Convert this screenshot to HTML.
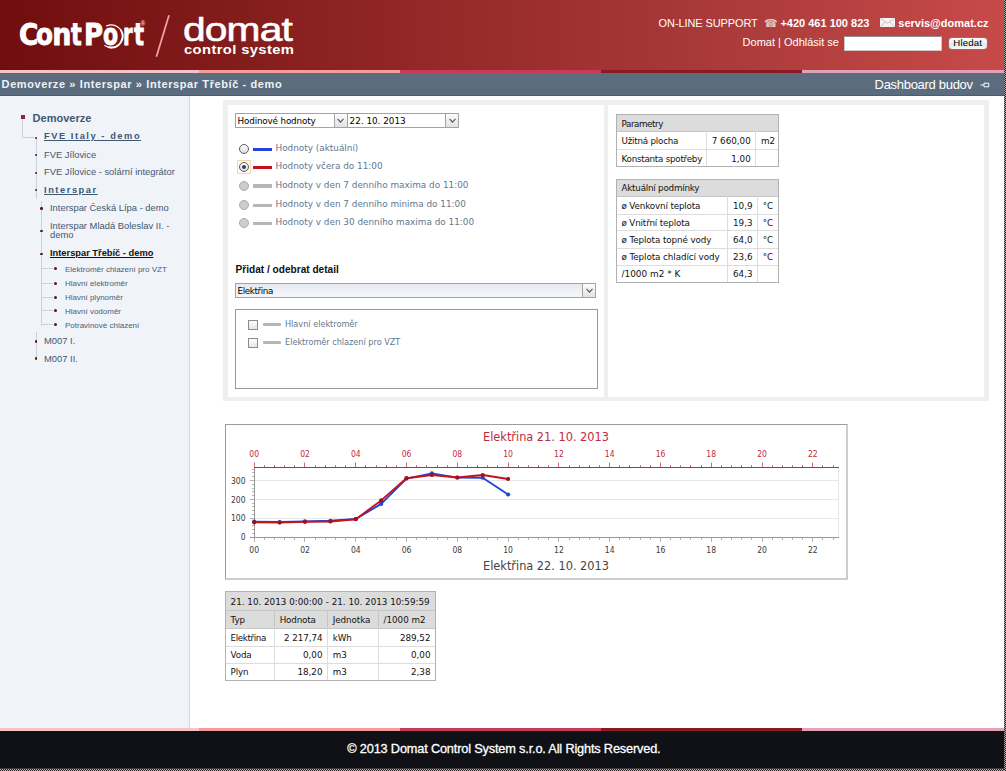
<!DOCTYPE html>
<html lang="cs">
<head>
<meta charset="utf-8">
<title>ContPort - Interspar Třebíč - demo</title>
<style>
*{box-sizing:border-box;margin:0;padding:0}
html,body{width:1006px;height:771px;overflow:hidden;background:#fff}
body{position:relative;font-family:"Liberation Sans",sans-serif;font-size:12px;color:#000}
.a{position:absolute;white-space:nowrap}
.sel{position:absolute;height:15px;border:1px solid #a3a3a3;font-family:"DejaVu Sans",sans-serif;font-size:9.6px;line-height:13px;white-space:nowrap;overflow:hidden;color:#000}
.sel .st{position:absolute;left:1.6px;top:0.9px}
.sel .arr{position:absolute;right:0;top:0;width:13px;height:13px;border-left:1px solid #a3a3a3;background:linear-gradient(#fdfdfd,#e2e2e2)}
.sel .arr svg{position:absolute;left:2.5px;top:4px}
</style>
</head>
<body>
<div class="a" id="header" style="left:0px;top:0px;width:1006px;height:70px;background:linear-gradient(to right,#720d0e 0%,#841e1d 25%,#992d2c 50%,#ae3c3c 75%,#c74a49 100%);"></div>
<div class="a" id="lg1" style="left:18.62px;top:19.60px;font-family:'DejaVu Sans Condensed','DejaVu Sans',sans-serif;font-size:29.9px;line-height:29.9px;color:#fff;font-weight:bold;-webkit-text-stroke:0.8px #fff;"><span style="display:inline-block;transform-origin:0 0;transform:scaleX(0.98);margin-right:-1.87px">C</span><span style="display:inline-block;transform-origin:0 0;transform:scaleX(0.918);margin-right:-2.76px">o</span><span style="display:inline-block;transform-origin:0 0;transform:scaleX(1.0);margin-right:0.04px">n</span><span style="display:inline-block;transform-origin:0 0;transform:scaleX(0.83);margin-right:-0.09px">t</span><span style="display:inline-block;transform-origin:0 0;transform:scaleX(0.965);margin-right:-0.62px">P</span><span style="display:inline-block;transform-origin:0 0;transform:scaleX(0.818);margin-right:0.85px">o</span><span style="display:inline-block;transform-origin:0 0;transform:scaleX(0.72);margin-right:-2.08px">r</span><span style="display:inline-block;transform-origin:0 0;transform:scaleX(0.776);margin-right:0.00px">t</span></div>
<div class="a" id="lg1r" style="left:140.6px;top:20.70px;font-family:'Liberation Sans',sans-serif;font-size:6.5px;line-height:6.5px;color:#f6c9c9;font-weight:bold;">®</div>
<svg class="a" style="left:94px;top:18px" width="36" height="36" viewBox="94 18 36 36"><path d="M106.5 26.0 A11.3 11.3 0 1 1 104.8 45.5" fill="none" stroke="#fff" stroke-width="1.1" stroke-linecap="round"/><path d="M121.1 30.6 A11.3 11.3 0 0 1 109.3 47.3" fill="none" stroke="#fff" stroke-width="1.9" stroke-linecap="round"/></svg>
<svg class="a" style="left:150px;top:10px" width="30" height="52"><line x1="19" y1="5.3" x2="6.4" y2="46.7" stroke="#f2a5a3" stroke-width="1.7"/></svg>
<div class="a" id="lg2" style="left:182.6px;top:12.54px;font-family:'Liberation Sans',sans-serif;font-size:33.4px;line-height:33.4px;color:#fff;letter-spacing:-0.7px;transform-origin:0 0;transform:scaleX(1.22);-webkit-text-stroke:0.6px #fff;">domat</div>
<div class="a" id="lg3" style="left:183.8px;top:43.69px;font-family:'Liberation Sans',sans-serif;font-size:12.3px;line-height:12.3px;color:#fff;font-weight:bold;letter-spacing:0.32px;transform-origin:0 0;transform:scaleX(1.2);">control system</div>
<div class="a" id="sup" style="left:658.6px;top:17.69px;font-family:'Liberation Sans',sans-serif;font-size:11px;line-height:11px;color:#fff;letter-spacing:-0.1px;">ON-LINE SUPPORT</div>
<div class="a" id="telic" style="left:764px;top:17.69px;font-family:'DejaVu Sans',sans-serif;font-size:11px;line-height:11px;color:#e3c3c3;">☎</div>
<div class="a" id="tel" style="left:780.4px;top:17.69px;font-family:'Liberation Sans',sans-serif;font-size:11px;line-height:11px;color:#fff;font-weight:bold;">+420 461 100 823</div>
<svg class="a" style="left:880px;top:18px" width="15" height="9" viewBox="0 0 15 9"><rect x="0" y="0" width="15" height="9" fill="#f6f3f3"/><path d="M0.3 0.3 L7.5 5.2 L14.7 0.3 M0.3 8.7 L5.3 4 M14.7 8.7 L9.7 4" stroke="#c2b4b4" stroke-width="0.8" fill="none"/></svg>
<div class="a" id="mail" style="left:898.3px;top:17.69px;font-family:'Liberation Sans',sans-serif;font-size:11px;line-height:11px;color:#fff;font-weight:bold;">servis@domat.cz</div>
<div class="a" id="dom" style="left:742.6px;top:37.19px;font-family:'Liberation Sans',sans-serif;font-size:11px;line-height:11px;color:#fff;">Domat | Odhlásit se</div>
<div class="a" style="left:844px;top:36px;width:98px;height:15px;background:#fff;border:1px solid #d0c4c4;border-top-color:#8e8e8e"></div>
<div class="a" id="btn" style="left:948px;top:37.3px;width:39.5px;height:12.7px;border-radius:4px;background:linear-gradient(#fff,#efefef 48%,#e4e4e4 52%,#f7f7f7);border:1px solid #8d6f6f;font-family:'Liberation Sans',sans-serif;font-size:9.6px;line-height:10.5px;text-align:center;color:#000;letter-spacing:.2px">Hledat</div>
<div class="a" style="left:0px;top:70px;width:199px;height:3px;background:#f3c3c8;"></div>
<div class="a" style="left:199px;top:70px;width:201px;height:3px;background:#f59b9c;"></div>
<div class="a" style="left:400px;top:70px;width:201px;height:3px;background:#c93a55;"></div>
<div class="a" style="left:601px;top:70px;width:201px;height:3px;background:#8a1b25;"></div>
<div class="a" style="left:802px;top:70px;width:204px;height:3px;background:#e2a1b6;"></div>
<div class="a" id="nav" style="left:0px;top:73px;width:1006px;height:23px;background:#5b6c7e;border-bottom:1px solid #4f5d6b"></div>
<div class="a" id="crumb" style="left:1.6px;top:78.69px;font-family:'Liberation Sans',sans-serif;font-size:11px;line-height:11px;color:#eef2f6;font-weight:bold;letter-spacing:0.6px;">Demoverze » Interspar » Interspar Třebíč - demo</div>
<div class="a" id="dash" style="left:874.6px;top:77.70px;font-family:'Liberation Sans',sans-serif;font-size:13px;line-height:13px;color:#fff;letter-spacing:-0.3px;">Dashboard budov</div>
<svg class="a" style="left:980px;top:82px" width="10" height="6" viewBox="0 0 10 6"><path d="M0.5 3 H4 M4 1.2 H8.8 V4.8 H4 Z" stroke="#fff" stroke-width="1" fill="none"/></svg>
<div class="a" id="side" style="left:0px;top:96px;width:190px;height:632px;background:#f0f4f8;border-right:1px solid #d3dae5"></div>
<div class="a" style="left:22.3px;top:119px;width:1px;height:19px;background:#cfcfdb;"></div>
<div class="a" style="left:22.3px;top:137.3px;width:12px;height:1px;background:#cfcfdb;"></div>
<div class="a" style="left:35.5px;top:139px;width:1px;height:60px;background:#cfcfdb;"></div>
<div class="a" style="left:40.8px;top:201px;width:1px;height:125px;background:#cfcfdb;"></div>
<div class="a" style="left:41px;top:268.2px;width:12px;height:1px;background:#cfcfdb;"></div>
<div class="a" style="left:41px;top:282.6px;width:12px;height:1px;background:#cfcfdb;"></div>
<div class="a" style="left:41px;top:296.6px;width:12px;height:1px;background:#cfcfdb;"></div>
<div class="a" style="left:41px;top:310.4px;width:12px;height:1px;background:#cfcfdb;"></div>
<div class="a" style="left:41px;top:324.4px;width:12px;height:1px;background:#cfcfdb;"></div>
<div class="a" style="left:35.5px;top:332px;width:1px;height:27px;background:#cfcfdb;"></div>
<div class="a" style="left:21px;top:115px;width:4px;height:4px;background:#8c2540;"></div>
<div class="a" id="s0" style="left:32.6px;top:112.69px;font-family:'Liberation Sans',sans-serif;font-size:11px;line-height:11px;color:#3f5873;font-weight:bold;">Demoverze</div>
<div class="a" style="left:34.7px;top:136.5px;width:2.6px;height:2.6px;background:#5a1626;border-radius:50%"></div>
<div class="a" style="left:44px;top:132.13px;font-family:'Liberation Sans',sans-serif;font-size:9.3px;line-height:9.3px;color:#3f5873;font-weight:bold;letter-spacing:1.55px;text-decoration:underline;">FVE Italy - demo</div>
<div class="a" style="left:34.7px;top:153.89999999999998px;width:2.6px;height:2.6px;background:#5a1626;border-radius:50%"></div>
<div class="a" style="left:44px;top:149.85px;font-family:'Liberation Sans',sans-serif;font-size:9.4px;line-height:9.4px;color:#3f5873;">FVE Jílovice</div>
<div class="a" style="left:34.7px;top:171.7px;width:2.6px;height:2.6px;background:#5a1626;border-radius:50%"></div>
<div class="a" style="left:44px;top:167.15px;font-family:'Liberation Sans',sans-serif;font-size:9.4px;line-height:9.4px;color:#3f5873;">FVE Jílovice - solární integrátor</div>
<div class="a" style="left:34.7px;top:188.79999999999998px;width:2.6px;height:2.6px;background:#5a1626;border-radius:50%"></div>
<div class="a" style="left:44px;top:185.93px;font-family:'Liberation Sans',sans-serif;font-size:9.3px;line-height:9.3px;color:#3f5873;font-weight:bold;letter-spacing:1.55px;text-decoration:underline;">Interspar</div>
<div class="a" style="left:40.0px;top:207.29999999999998px;width:2.6px;height:2.6px;background:#5a1626;border-radius:50%"></div>
<div class="a" style="left:50px;top:202.95px;font-family:'Liberation Sans',sans-serif;font-size:9.4px;line-height:9.4px;color:#3f5873;">Interspar Česká Lípa - demo</div>
<div class="a" style="left:40.0px;top:229.7px;width:2.6px;height:2.6px;background:#5a1626;border-radius:50%"></div>
<div class="a" style="left:50px;top:221.45px;font-family:'Liberation Sans',sans-serif;font-size:9.4px;line-height:9.4px;color:#3f5873;">Interspar Mladá Boleslav II. -</div>
<div class="a" style="left:50px;top:230.35px;font-family:'Liberation Sans',sans-serif;font-size:9.4px;line-height:9.4px;color:#3f5873;">demo</div>
<div class="a" style="left:40.0px;top:252.5px;width:2.6px;height:2.6px;background:#5a1626;border-radius:50%"></div>
<div class="a" id="s8" style="left:50px;top:248.53px;font-family:'Liberation Sans',sans-serif;font-size:9.3px;line-height:9.3px;color:#111;font-weight:bold;text-decoration:underline;">Interspar Třebíč - demo</div>
<div class="a" style="left:54.0px;top:267.1px;width:3px;height:3px;background:#5a1626;border-radius:50%"></div>
<div class="a" style="left:65px;top:265.53px;font-family:'Liberation Sans',sans-serif;font-size:8px;line-height:8px;color:#4a607a;">Elektroměr chlazení pro VZT</div>
<div class="a" style="left:54.0px;top:281.6px;width:3px;height:3px;background:#5a1626;border-radius:50%"></div>
<div class="a" style="left:65px;top:280.03px;font-family:'Liberation Sans',sans-serif;font-size:8px;line-height:8px;color:#4a607a;">Hlavní elektroměr</div>
<div class="a" style="left:54.0px;top:295.6px;width:3px;height:3px;background:#5a1626;border-radius:50%"></div>
<div class="a" style="left:65px;top:294.03px;font-family:'Liberation Sans',sans-serif;font-size:8px;line-height:8px;color:#4a607a;">Hlavní plynoměr</div>
<div class="a" style="left:54.0px;top:309.40000000000003px;width:3px;height:3px;background:#5a1626;border-radius:50%"></div>
<div class="a" style="left:65px;top:307.83px;font-family:'Liberation Sans',sans-serif;font-size:8px;line-height:8px;color:#4a607a;">Hlavní vodoměr</div>
<div class="a" style="left:54.0px;top:323.40000000000003px;width:3px;height:3px;background:#5a1626;border-radius:50%"></div>
<div class="a" style="left:65px;top:321.83px;font-family:'Liberation Sans',sans-serif;font-size:8px;line-height:8px;color:#4a607a;">Potravinové chlazení</div>
<div class="a" style="left:34.7px;top:340.0px;width:2.6px;height:2.6px;background:#5a1626;border-radius:50%"></div>
<div class="a" style="left:44px;top:335.65px;font-family:'Liberation Sans',sans-serif;font-size:9.4px;line-height:9.4px;color:#3f5873;">M007 I.</div>
<div class="a" style="left:34.7px;top:357.4px;width:2.6px;height:2.6px;background:#5a1626;border-radius:50%"></div>
<div class="a" style="left:44px;top:354.15px;font-family:'Liberation Sans',sans-serif;font-size:9.4px;line-height:9.4px;color:#3f5873;">M007 II.</div>
<div class="a" style="left:223px;top:100px;width:766px;height:301px;background:#efefef;"></div>
<div class="a" style="left:228px;top:105px;width:376px;height:292px;background:#fff;"></div>
<div class="a" style="left:608px;top:105px;width:376px;height:292px;background:#fff;"></div>
<div class="sel" style="left:235px;top:112.6px;width:112.5px;background:#fff;font-size:8.78px;letter-spacing:-0.15px"><span class="st" style="top:1.9px">Hodinové hodnoty</span><span class="arr"><svg width="7" height="5" viewBox="0 0 7 5"><path d="M0.5 0.8 L3.5 4.2 L6.5 0.8" stroke="#5a5a5a" stroke-width="1.15" fill="none"/></svg></span></div>
<div class="sel" style="left:347px;top:112.6px;width:112px;background:#fff;font-size:8.82px;letter-spacing:0px"><span class="st" style="top:1.9px">22. 10. 2013</span><span class="arr"><svg width="7" height="5" viewBox="0 0 7 5"><path d="M0.5 0.8 L3.5 4.2 L6.5 0.8" stroke="#5a5a5a" stroke-width="1.15" fill="none"/></svg></span></div>
<div class="a" style="left:239px;top:144.3px;width:10px;height:10px;border-radius:50%;background:linear-gradient(#fff,#dcdce0);border:1px solid #5f5b68"></div>
<div class="a" style="left:253.3px;top:147.60000000000002px;width:18.5px;height:3.4px;background:#2346d8;"></div>
<div class="a" style="left:275.5px;top:143.90px;font-family:'DejaVu Sans',sans-serif;font-size:8.865px;line-height:8.865px;color:#5f778f;">Hodnoty (aktuální)</div>
<div class="a" style="left:237px;top:160.20000000000002px;width:14px;height:14px;background:#fffaf3;border:1px solid #f5d8ad"></div>
<div class="a" style="left:239px;top:162.20000000000002px;width:10px;height:10px;border-radius:50%;background:linear-gradient(#fff,#dcdce0);border:1px solid #5f5b68"></div>
<div class="a" style="left:242px;top:165.20000000000002px;width:4px;height:4px;border-radius:50%;background:#4a3b4b"></div>
<div class="a" style="left:253.3px;top:165.50000000000003px;width:18.5px;height:3.4px;background:#c4121e;"></div>
<div class="a" style="left:275.5px;top:161.80px;font-family:'DejaVu Sans',sans-serif;font-size:8.865px;line-height:8.865px;color:#5f778f;">Hodnoty včera do 11:00</div>
<div class="a" style="left:239px;top:181.0px;width:10px;height:10px;border-radius:50%;background:#cdcdcd;border:1px solid #ababab"></div>
<div class="a" style="left:253.3px;top:184.3px;width:18.5px;height:3.4px;background:#b6b6b6;"></div>
<div class="a" style="left:275.5px;top:180.60px;font-family:'DejaVu Sans',sans-serif;font-size:8.865px;line-height:8.865px;color:#5f778f;">Hodnoty v den 7 denního maxima do 11:00</div>
<div class="a" style="left:239px;top:200.20000000000002px;width:10px;height:10px;border-radius:50%;background:#cdcdcd;border:1px solid #ababab"></div>
<div class="a" style="left:253.3px;top:203.50000000000003px;width:18.5px;height:3.4px;background:#b6b6b6;"></div>
<div class="a" style="left:275.5px;top:199.80px;font-family:'DejaVu Sans',sans-serif;font-size:8.865px;line-height:8.865px;color:#5f778f;">Hodnoty v den 7 denního minima do 11:00</div>
<div class="a" style="left:239px;top:218.3px;width:10px;height:10px;border-radius:50%;background:#cdcdcd;border:1px solid #ababab"></div>
<div class="a" style="left:253.3px;top:221.60000000000002px;width:18.5px;height:3.4px;background:#b6b6b6;"></div>
<div class="a" style="left:275.5px;top:217.90px;font-family:'DejaVu Sans',sans-serif;font-size:8.865px;line-height:8.865px;color:#5f778f;">Hodnoty v den 30 denního maxima do 11:00</div>
<div class="a" id="pridat" style="left:235.6px;top:265.16px;font-family:'Liberation Sans',sans-serif;font-size:10.1px;line-height:10.1px;color:#111;font-weight:bold;">Přidat / odebrat detail</div>
<div class="sel" style="left:235px;top:283.2px;width:361px;background:linear-gradient(#e6eaf1,#f5f7fa);font-size:8.78px;letter-spacing:-0.38px"><span class="st" style="top:0.9px">Elektřina</span><span class="arr"><svg width="7" height="5" viewBox="0 0 7 5"><path d="M0.5 0.8 L3.5 4.2 L6.5 0.8" stroke="#5a5a5a" stroke-width="1.15" fill="none"/></svg></span></div>
<div class="a" style="left:235px;top:309px;width:363px;height:80px;background:#fff;border:1px solid #9a9a9a"></div>
<div class="a" style="left:248px;top:320.4px;width:9.5px;height:9.5px;border:1px solid #8c8c8c;background:linear-gradient(#fdfdfd,#e6e6e6)"></div>
<div class="a" style="left:262.8px;top:322.8px;width:18px;height:3px;background:#b6b6b6;border-radius:1px"></div>
<div class="a" style="left:285px;top:320.11px;font-family:'DejaVu Sans',sans-serif;font-size:8.145px;line-height:8.145px;color:#5f778f;">Hlavní elektroměr</div>
<div class="a" style="left:248px;top:338.3px;width:9.5px;height:9.5px;border:1px solid #8c8c8c;background:linear-gradient(#fdfdfd,#e6e6e6)"></div>
<div class="a" style="left:262.8px;top:340.70000000000005px;width:18px;height:3px;background:#b6b6b6;border-radius:1px"></div>
<div class="a" style="left:285px;top:338.01px;font-family:'DejaVu Sans',sans-serif;font-size:8.145px;line-height:8.145px;color:#5f778f;">Elektroměr chlazení pro VZT</div>
<div class="a" id="t1" style="left:615.8px;top:113.8px;width:163.4px;height:53.4px;background:#fff"></div>
<div class="a" style="left:616px;top:114px;width:163px;height:17px;background:#dcdcdc;"></div>
<div class="a" style="left:616px;top:131px;width:163px;height:1px;background:#c6c6c6;"></div>
<div class="a" style="left:616px;top:149px;width:163px;height:1px;background:#dddddd;"></div>
<div class="a" style="left:621.5px;top:119.99px;font-family:'DejaVu Sans',sans-serif;font-size:8.757px;line-height:8.757px;color:#111;letter-spacing:-0.43px;">Parametry</div>
<div class="a" style="left:621.5px;top:136.79px;font-family:'DejaVu Sans',sans-serif;font-size:8.757px;line-height:8.757px;color:#111;letter-spacing:-0.22px;">Užitná plocha</div>
<div class="a" style="left:706px;top:131px;width:1px;height:19px;background:#dddddd;"></div>
<div class="a" style="right:255.30000000000007px;top:136.79px;font-family:'DejaVu Sans',sans-serif;font-size:8.757px;line-height:8.757px;color:#111;">7 660,00</div>
<div class="a" style="left:755px;top:131px;width:1px;height:19px;background:#dddddd;"></div>
<div class="a" style="left:761.0px;top:136.79px;font-family:'DejaVu Sans',sans-serif;font-size:8.757px;line-height:8.757px;color:#111;letter-spacing:-0.07px;">m2</div>
<div class="a" style="left:621.5px;top:154.79px;font-family:'DejaVu Sans',sans-serif;font-size:8.757px;line-height:8.757px;color:#111;letter-spacing:-0.25px;">Konstanta spotřeby</div>
<div class="a" style="left:706px;top:149px;width:1px;height:18px;background:#dddddd;"></div>
<div class="a" style="right:255.30000000000007px;top:154.79px;font-family:'DejaVu Sans',sans-serif;font-size:8.757px;line-height:8.757px;color:#111;">1,00</div>
<div class="a" style="left:755px;top:149px;width:1px;height:18px;background:#dddddd;"></div>
<div class="a" style="left:616px;top:114px;width:163px;height:53px;border:1px solid #b2b2b2"></div>
<div class="a" id="t2" style="left:615.8px;top:178.7px;width:163.4px;height:104.2px;background:#fff"></div>
<div class="a" style="left:616px;top:179px;width:163px;height:17px;background:#dcdcdc;"></div>
<div class="a" style="left:616px;top:196px;width:163px;height:1px;background:#c6c6c6;"></div>
<div class="a" style="left:616px;top:214px;width:163px;height:1px;background:#dddddd;"></div>
<div class="a" style="left:616px;top:230px;width:163px;height:1px;background:#dddddd;"></div>
<div class="a" style="left:616px;top:248px;width:163px;height:1px;background:#dddddd;"></div>
<div class="a" style="left:616px;top:265px;width:163px;height:1px;background:#dddddd;"></div>
<div class="a" style="left:621.5px;top:184.39px;font-family:'DejaVu Sans',sans-serif;font-size:8.757px;line-height:8.757px;color:#111;letter-spacing:-0.22px;">Aktuální podmínky</div>
<div class="a" style="left:621.5px;top:201.79px;font-family:'DejaVu Sans',sans-serif;font-size:8.757px;line-height:8.757px;color:#111;letter-spacing:-0.14px;">ø Venkovní teplota</div>
<div class="a" style="left:727px;top:196px;width:1px;height:19px;background:#dddddd;"></div>
<div class="a" style="right:253.5px;top:201.79px;font-family:'DejaVu Sans',sans-serif;font-size:8.757px;line-height:8.757px;color:#111;">10,9</div>
<div class="a" style="left:757px;top:196px;width:1px;height:19px;background:#dddddd;"></div>
<div class="a" style="left:762.8000000000001px;top:201.79px;font-family:'DejaVu Sans',sans-serif;font-size:8.757px;line-height:8.757px;color:#111;letter-spacing:-0.17px;">°C</div>
<div class="a" style="left:621.5px;top:218.79px;font-family:'DejaVu Sans',sans-serif;font-size:8.757px;line-height:8.757px;color:#111;letter-spacing:-0.15px;">ø Vnitřní teplota</div>
<div class="a" style="left:727px;top:214px;width:1px;height:17px;background:#dddddd;"></div>
<div class="a" style="right:253.5px;top:218.79px;font-family:'DejaVu Sans',sans-serif;font-size:8.757px;line-height:8.757px;color:#111;">19,3</div>
<div class="a" style="left:757px;top:214px;width:1px;height:17px;background:#dddddd;"></div>
<div class="a" style="left:762.8000000000001px;top:218.79px;font-family:'DejaVu Sans',sans-serif;font-size:8.757px;line-height:8.757px;color:#111;letter-spacing:-0.17px;">°C</div>
<div class="a" style="left:621.5px;top:235.79px;font-family:'DejaVu Sans',sans-serif;font-size:8.757px;line-height:8.757px;color:#111;letter-spacing:-0.09px;">ø Teplota topné vody</div>
<div class="a" style="left:727px;top:230px;width:1px;height:19px;background:#dddddd;"></div>
<div class="a" style="right:253.5px;top:235.79px;font-family:'DejaVu Sans',sans-serif;font-size:8.757px;line-height:8.757px;color:#111;">64,0</div>
<div class="a" style="left:757px;top:230px;width:1px;height:19px;background:#dddddd;"></div>
<div class="a" style="left:762.8000000000001px;top:235.79px;font-family:'DejaVu Sans',sans-serif;font-size:8.757px;line-height:8.757px;color:#111;letter-spacing:-0.17px;">°C</div>
<div class="a" style="left:621.5px;top:252.99px;font-family:'DejaVu Sans',sans-serif;font-size:8.757px;line-height:8.757px;color:#111;letter-spacing:-0.07px;">ø Teplota chladící vody</div>
<div class="a" style="left:727px;top:248px;width:1px;height:18px;background:#dddddd;"></div>
<div class="a" style="right:253.5px;top:252.99px;font-family:'DejaVu Sans',sans-serif;font-size:8.757px;line-height:8.757px;color:#111;">23,6</div>
<div class="a" style="left:757px;top:248px;width:1px;height:18px;background:#dddddd;"></div>
<div class="a" style="left:762.8000000000001px;top:252.99px;font-family:'DejaVu Sans',sans-serif;font-size:8.757px;line-height:8.757px;color:#111;letter-spacing:-0.17px;">°C</div>
<div class="a" style="left:621.5px;top:270.06px;font-family:'DejaVu Sans',sans-serif;font-size:8.91px;line-height:8.91px;color:#111;">/1000 m2 * K</div>
<div class="a" style="left:727px;top:265px;width:1px;height:18px;background:#dddddd;"></div>
<div class="a" style="right:253.5px;top:270.19px;font-family:'DejaVu Sans',sans-serif;font-size:8.757px;line-height:8.757px;color:#111;">64,3</div>
<div class="a" style="left:757px;top:265px;width:1px;height:18px;background:#dddddd;"></div>
<div class="a" style="left:616px;top:179px;width:163px;height:104px;border:1px solid #b2b2b2"></div>
<div class="a" id="t3" style="left:224.9px;top:591.0px;width:211.2px;height:89.8px;background:#fff"></div>
<div class="a" style="left:225px;top:591px;width:211px;height:19px;background:#dcdcdc;"></div>
<div class="a" style="left:225px;top:610px;width:211px;height:18px;background:#dcdcdc;"></div>
<div class="a" style="left:225px;top:610px;width:211px;height:1px;background:#c6c6c6;"></div>
<div class="a" style="left:225px;top:628px;width:211px;height:1px;background:#c6c6c6;"></div>
<div class="a" style="left:225px;top:646px;width:211px;height:1px;background:#dddddd;"></div>
<div class="a" style="left:225px;top:663px;width:211px;height:1px;background:#dddddd;"></div>
<div class="a" style="left:230.6px;top:597.78px;font-family:'DejaVu Sans',sans-serif;font-size:8.775px;line-height:8.775px;color:#111;">21. 10. 2013 0:00:00 - 21. 10. 2013 10:59:59</div>
<div class="a" style="left:230.6px;top:615.69px;font-family:'DejaVu Sans',sans-serif;font-size:8.757px;line-height:8.757px;color:#111;letter-spacing:-0.07px;">Typ</div>
<div class="a" style="left:274px;top:610px;width:1px;height:19px;background:#c6c6c6;"></div>
<div class="a" style="left:279.7px;top:615.69px;font-family:'DejaVu Sans',sans-serif;font-size:8.757px;line-height:8.757px;color:#111;letter-spacing:-0.17px;">Hodnota</div>
<div class="a" style="left:327px;top:610px;width:1px;height:19px;background:#c6c6c6;"></div>
<div class="a" style="left:332.8px;top:615.69px;font-family:'DejaVu Sans',sans-serif;font-size:8.757px;line-height:8.757px;color:#111;letter-spacing:-0.07px;">Jednotka</div>
<div class="a" style="left:378px;top:610px;width:1px;height:19px;background:#c6c6c6;"></div>
<div class="a" style="left:383.59999999999997px;top:615.69px;font-family:'DejaVu Sans',sans-serif;font-size:8.757px;line-height:8.757px;color:#111;letter-spacing:-0.02px;">/1000 m2</div>
<div class="a" style="left:230.6px;top:633.74px;font-family:'DejaVu Sans',sans-serif;font-size:8.757px;line-height:8.757px;color:#111;letter-spacing:-0.38px;">Elektřina</div>
<div class="a" style="left:274px;top:628px;width:1px;height:19px;background:#dddddd;"></div>
<div class="a" style="right:683.5699999999999px;top:633.74px;font-family:'DejaVu Sans',sans-serif;font-size:8.757px;line-height:8.757px;color:#111;letter-spacing:-0.07px;">2 217,74</div>
<div class="a" style="left:327px;top:628px;width:1px;height:19px;background:#dddddd;"></div>
<div class="a" style="left:332.8px;top:633.74px;font-family:'DejaVu Sans',sans-serif;font-size:8.757px;line-height:8.757px;color:#111;letter-spacing:-0.17px;">kWh</div>
<div class="a" style="left:378px;top:628px;width:1px;height:19px;background:#dddddd;"></div>
<div class="a" style="right:575.5px;top:633.74px;font-family:'DejaVu Sans',sans-serif;font-size:8.757px;line-height:8.757px;color:#111;">289,52</div>
<div class="a" style="left:230.6px;top:650.59px;font-family:'DejaVu Sans',sans-serif;font-size:8.757px;line-height:8.757px;color:#111;letter-spacing:-0.17px;">Voda</div>
<div class="a" style="left:274px;top:646px;width:1px;height:18px;background:#dddddd;"></div>
<div class="a" style="right:683.5px;top:650.59px;font-family:'DejaVu Sans',sans-serif;font-size:8.757px;line-height:8.757px;color:#111;">0,00</div>
<div class="a" style="left:327px;top:646px;width:1px;height:18px;background:#dddddd;"></div>
<div class="a" style="left:332.8px;top:650.59px;font-family:'DejaVu Sans',sans-serif;font-size:8.757px;line-height:8.757px;color:#111;letter-spacing:-0.07px;">m3</div>
<div class="a" style="left:378px;top:646px;width:1px;height:18px;background:#dddddd;"></div>
<div class="a" style="right:575.5px;top:650.59px;font-family:'DejaVu Sans',sans-serif;font-size:8.757px;line-height:8.757px;color:#111;">0,00</div>
<div class="a" style="left:230.6px;top:667.59px;font-family:'DejaVu Sans',sans-serif;font-size:8.757px;line-height:8.757px;color:#111;letter-spacing:-0.17px;">Plyn</div>
<div class="a" style="left:274px;top:663px;width:1px;height:18px;background:#dddddd;"></div>
<div class="a" style="right:683.5px;top:667.59px;font-family:'DejaVu Sans',sans-serif;font-size:8.757px;line-height:8.757px;color:#111;">18,20</div>
<div class="a" style="left:327px;top:663px;width:1px;height:18px;background:#dddddd;"></div>
<div class="a" style="left:332.8px;top:667.59px;font-family:'DejaVu Sans',sans-serif;font-size:8.757px;line-height:8.757px;color:#111;letter-spacing:-0.07px;">m3</div>
<div class="a" style="left:378px;top:663px;width:1px;height:18px;background:#dddddd;"></div>
<div class="a" style="right:575.5px;top:667.59px;font-family:'DejaVu Sans',sans-serif;font-size:8.757px;line-height:8.757px;color:#111;">2,38</div>
<div class="a" style="left:225px;top:591px;width:211px;height:90px;border:1px solid #b2b2b2"></div>
<svg class="a" style="left:225px;top:424px" width="623" height="156" viewBox="225 424 623 156" font-family='"DejaVu Sans Condensed","DejaVu Sans",sans-serif'><rect x="225.5" y="424.5" width="621.5" height="154.5" fill="#fff" stroke="#9c9c9c"/><g stroke="#e6e6e6"><line x1="255" y1="480.5" x2="838" y2="480.5"/><line x1="255" y1="499.5" x2="838" y2="499.5"/><line x1="255" y1="518.5" x2="838" y2="518.5"/><line x1="838.5" y1="468" x2="838.5" y2="537"/></g><g stroke="#b4b4b4"><line x1="250" y1="537.5" x2="254" y2="537.5"/><line x1="252" y1="533.5" x2="254" y2="533.5"/><line x1="252" y1="529.5" x2="254" y2="529.5"/><line x1="252" y1="525.5" x2="254" y2="525.5"/><line x1="252" y1="522.5" x2="254" y2="522.5"/><line x1="250" y1="518.5" x2="254" y2="518.5"/><line x1="252" y1="514.5" x2="254" y2="514.5"/><line x1="252" y1="510.5" x2="254" y2="510.5"/><line x1="252" y1="506.5" x2="254" y2="506.5"/><line x1="252" y1="503.5" x2="254" y2="503.5"/><line x1="250" y1="499.5" x2="254" y2="499.5"/><line x1="252" y1="495.5" x2="254" y2="495.5"/><line x1="252" y1="491.5" x2="254" y2="491.5"/><line x1="252" y1="488.5" x2="254" y2="488.5"/><line x1="252" y1="484.5" x2="254" y2="484.5"/><line x1="250" y1="480.5" x2="254" y2="480.5"/><line x1="252" y1="476.5" x2="254" y2="476.5"/><line x1="252" y1="472.5" x2="254" y2="472.5"/><line x1="252" y1="469.5" x2="254" y2="469.5"/><line x1="254.5" y1="538" x2="254.5" y2="542"/><line x1="264.5" y1="538" x2="264.5" y2="540"/><line x1="274.5" y1="538" x2="274.5" y2="540"/><line x1="284.5" y1="538" x2="284.5" y2="540"/><line x1="294.5" y1="538" x2="294.5" y2="540"/><line x1="304.5" y1="538" x2="304.5" y2="542"/><line x1="315.5" y1="538" x2="315.5" y2="540"/><line x1="325.5" y1="538" x2="325.5" y2="540"/><line x1="335.5" y1="538" x2="335.5" y2="540"/><line x1="345.5" y1="538" x2="345.5" y2="540"/><line x1="355.5" y1="538" x2="355.5" y2="542"/><line x1="365.5" y1="538" x2="365.5" y2="540"/><line x1="376.5" y1="538" x2="376.5" y2="540"/><line x1="386.5" y1="538" x2="386.5" y2="540"/><line x1="396.5" y1="538" x2="396.5" y2="540"/><line x1="406.5" y1="538" x2="406.5" y2="542"/><line x1="416.5" y1="538" x2="416.5" y2="540"/><line x1="426.5" y1="538" x2="426.5" y2="540"/><line x1="437.5" y1="538" x2="437.5" y2="540"/><line x1="447.5" y1="538" x2="447.5" y2="540"/><line x1="457.5" y1="538" x2="457.5" y2="542"/><line x1="467.5" y1="538" x2="467.5" y2="540"/><line x1="477.5" y1="538" x2="477.5" y2="540"/><line x1="487.5" y1="538" x2="487.5" y2="540"/><line x1="497.5" y1="538" x2="497.5" y2="540"/><line x1="508.5" y1="538" x2="508.5" y2="542"/><line x1="518.5" y1="538" x2="518.5" y2="540"/><line x1="528.5" y1="538" x2="528.5" y2="540"/><line x1="538.5" y1="538" x2="538.5" y2="540"/><line x1="548.5" y1="538" x2="548.5" y2="540"/><line x1="558.5" y1="538" x2="558.5" y2="542"/><line x1="569.5" y1="538" x2="569.5" y2="540"/><line x1="579.5" y1="538" x2="579.5" y2="540"/><line x1="589.5" y1="538" x2="589.5" y2="540"/><line x1="599.5" y1="538" x2="599.5" y2="540"/><line x1="609.5" y1="538" x2="609.5" y2="542"/><line x1="619.5" y1="538" x2="619.5" y2="540"/><line x1="629.5" y1="538" x2="629.5" y2="540"/><line x1="640.5" y1="538" x2="640.5" y2="540"/><line x1="650.5" y1="538" x2="650.5" y2="540"/><line x1="660.5" y1="538" x2="660.5" y2="542"/><line x1="670.5" y1="538" x2="670.5" y2="540"/><line x1="680.5" y1="538" x2="680.5" y2="540"/><line x1="690.5" y1="538" x2="690.5" y2="540"/><line x1="701.5" y1="538" x2="701.5" y2="540"/><line x1="711.5" y1="538" x2="711.5" y2="542"/><line x1="721.5" y1="538" x2="721.5" y2="540"/><line x1="731.5" y1="538" x2="731.5" y2="540"/><line x1="741.5" y1="538" x2="741.5" y2="540"/><line x1="751.5" y1="538" x2="751.5" y2="540"/><line x1="762.5" y1="538" x2="762.5" y2="542"/><line x1="772.5" y1="538" x2="772.5" y2="540"/><line x1="782.5" y1="538" x2="782.5" y2="540"/><line x1="792.5" y1="538" x2="792.5" y2="540"/><line x1="802.5" y1="538" x2="802.5" y2="540"/><line x1="812.5" y1="538" x2="812.5" y2="542"/><line x1="822.5" y1="538" x2="822.5" y2="540"/><line x1="833.5" y1="538" x2="833.5" y2="540"/></g><g stroke="#979797"><line x1="254.5" y1="467" x2="254.5" y2="538"/><line x1="250" y1="537.5" x2="839" y2="537.5"/></g><g stroke="#cf6a72"><line x1="254.5" y1="462.5" x2="254.5" y2="467"/><line x1="264.5" y1="465" x2="264.5" y2="467"/><line x1="274.5" y1="465" x2="274.5" y2="467"/><line x1="284.5" y1="465" x2="284.5" y2="467"/><line x1="294.5" y1="465" x2="294.5" y2="467"/><line x1="304.5" y1="462.5" x2="304.5" y2="467"/><line x1="315.5" y1="465" x2="315.5" y2="467"/><line x1="325.5" y1="465" x2="325.5" y2="467"/><line x1="335.5" y1="465" x2="335.5" y2="467"/><line x1="345.5" y1="465" x2="345.5" y2="467"/><line x1="355.5" y1="462.5" x2="355.5" y2="467"/><line x1="365.5" y1="465" x2="365.5" y2="467"/><line x1="376.5" y1="465" x2="376.5" y2="467"/><line x1="386.5" y1="465" x2="386.5" y2="467"/><line x1="396.5" y1="465" x2="396.5" y2="467"/><line x1="406.5" y1="462.5" x2="406.5" y2="467"/><line x1="416.5" y1="465" x2="416.5" y2="467"/><line x1="426.5" y1="465" x2="426.5" y2="467"/><line x1="437.5" y1="465" x2="437.5" y2="467"/><line x1="447.5" y1="465" x2="447.5" y2="467"/><line x1="457.5" y1="462.5" x2="457.5" y2="467"/><line x1="467.5" y1="465" x2="467.5" y2="467"/><line x1="477.5" y1="465" x2="477.5" y2="467"/><line x1="487.5" y1="465" x2="487.5" y2="467"/><line x1="497.5" y1="465" x2="497.5" y2="467"/><line x1="508.5" y1="462.5" x2="508.5" y2="467"/><line x1="518.5" y1="465" x2="518.5" y2="467"/><line x1="528.5" y1="465" x2="528.5" y2="467"/><line x1="538.5" y1="465" x2="538.5" y2="467"/><line x1="548.5" y1="465" x2="548.5" y2="467"/><line x1="558.5" y1="462.5" x2="558.5" y2="467"/><line x1="569.5" y1="465" x2="569.5" y2="467"/><line x1="579.5" y1="465" x2="579.5" y2="467"/><line x1="589.5" y1="465" x2="589.5" y2="467"/><line x1="599.5" y1="465" x2="599.5" y2="467"/><line x1="609.5" y1="462.5" x2="609.5" y2="467"/><line x1="619.5" y1="465" x2="619.5" y2="467"/><line x1="629.5" y1="465" x2="629.5" y2="467"/><line x1="640.5" y1="465" x2="640.5" y2="467"/><line x1="650.5" y1="465" x2="650.5" y2="467"/><line x1="660.5" y1="462.5" x2="660.5" y2="467"/><line x1="670.5" y1="465" x2="670.5" y2="467"/><line x1="680.5" y1="465" x2="680.5" y2="467"/><line x1="690.5" y1="465" x2="690.5" y2="467"/><line x1="701.5" y1="465" x2="701.5" y2="467"/><line x1="711.5" y1="462.5" x2="711.5" y2="467"/><line x1="721.5" y1="465" x2="721.5" y2="467"/><line x1="731.5" y1="465" x2="731.5" y2="467"/><line x1="741.5" y1="465" x2="741.5" y2="467"/><line x1="751.5" y1="465" x2="751.5" y2="467"/><line x1="762.5" y1="462.5" x2="762.5" y2="467"/><line x1="772.5" y1="465" x2="772.5" y2="467"/><line x1="782.5" y1="465" x2="782.5" y2="467"/><line x1="792.5" y1="465" x2="792.5" y2="467"/><line x1="802.5" y1="465" x2="802.5" y2="467"/><line x1="812.5" y1="462.5" x2="812.5" y2="467"/><line x1="822.5" y1="465" x2="822.5" y2="467"/><line x1="833.5" y1="465" x2="833.5" y2="467"/></g><g stroke="#be2a40"><line x1="254" y1="467.5" x2="839" y2="467.5"/></g><g fill="#be2a40" font-size="8.5" text-anchor="middle"><text x="254.2" y="456.8">00</text><text x="305.0" y="456.8">02</text><text x="355.8" y="456.8">04</text><text x="406.5" y="456.8">06</text><text x="457.3" y="456.8">08</text><text x="508.1" y="456.8">10</text><text x="558.9" y="456.8">12</text><text x="609.7" y="456.8">14</text><text x="660.5" y="456.8">16</text><text x="711.2" y="456.8">18</text><text x="762.0" y="456.8">20</text><text x="812.8" y="456.8">22</text></g><g fill="#3a3a3a" font-size="8.5" text-anchor="middle"><text x="254.2" y="552.5">00</text><text x="305.0" y="552.5">02</text><text x="355.8" y="552.5">04</text><text x="406.5" y="552.5">06</text><text x="457.3" y="552.5">08</text><text x="508.1" y="552.5">10</text><text x="558.9" y="552.5">12</text><text x="609.7" y="552.5">14</text><text x="660.5" y="552.5">16</text><text x="711.2" y="552.5">18</text><text x="762.0" y="552.5">20</text><text x="812.8" y="552.5">22</text></g><g fill="#3a3a3a" font-size="8.5" text-anchor="end"><text x="245.6" y="483.5">300</text><text x="245.6" y="502.5">200</text><text x="245.6" y="521.4">100</text><text x="245.6" y="540.4">0</text></g><text x="546" y="441.2" fill="#be2a40" font-size="12.6" text-anchor="middle">Elektřina 21. 10. 2013</text><text x="546" y="569.6" fill="#444" font-size="12.6" text-anchor="middle">Elektřina 22. 10. 2013</text><polyline fill="none" stroke="#2346d8" stroke-width="1.9" stroke-linejoin="round" points="254.2,521.6 279.6,522 305.0,521.4 330.4,520.8 355.8,519 381.2,503.9 406.5,478.6 431.9,473.4 457.3,477.6 482.7,477.7 508.1,494.5"/><g fill="#2346d8"><circle cx="254.2" cy="521.6" r="2.1"/><circle cx="279.6" cy="522" r="2.1"/><circle cx="305.0" cy="521.4" r="2.1"/><circle cx="330.4" cy="520.8" r="2.1"/><circle cx="355.8" cy="519" r="2.1"/><circle cx="381.2" cy="503.9" r="2.1"/><circle cx="406.5" cy="478.6" r="2.1"/><circle cx="431.9" cy="473.4" r="2.1"/><circle cx="457.3" cy="477.6" r="2.1"/><circle cx="482.7" cy="477.7" r="2.1"/><circle cx="508.1" cy="494.5" r="2.1"/></g><polyline fill="none" stroke="#c4121e" stroke-width="1.9" stroke-linejoin="round" points="254.2,522.3 279.6,522.6 305.0,521.8 330.4,521.5 355.8,519.2 381.2,500.4 406.5,478.2 431.9,475 457.3,477.5 482.7,475 508.1,479"/><g fill="#a3101a"><circle cx="254.2" cy="522.3" r="2.1"/><circle cx="279.6" cy="522.6" r="2.1"/><circle cx="305.0" cy="521.8" r="2.1"/><circle cx="330.4" cy="521.5" r="2.1"/><circle cx="355.8" cy="519.2" r="2.1"/><circle cx="381.2" cy="500.4" r="2.1"/><circle cx="406.5" cy="478.2" r="2.1"/><circle cx="431.9" cy="475" r="2.1"/><circle cx="457.3" cy="477.5" r="2.1"/><circle cx="482.7" cy="475" r="2.1"/><circle cx="508.1" cy="479" r="2.1"/></g></svg>
<div class="a" style="left:0px;top:728px;width:199px;height:3px;background:#f3c3c8;"></div>
<div class="a" style="left:199px;top:728px;width:201px;height:3px;background:#f59b9c;"></div>
<div class="a" style="left:400px;top:728px;width:201px;height:3px;background:#c93a55;"></div>
<div class="a" style="left:601px;top:728px;width:201px;height:3px;background:#8a1b25;"></div>
<div class="a" style="left:802px;top:728px;width:204px;height:3px;background:#e2a1b6;"></div>
<div class="a" style="left:0px;top:731px;width:1006px;height:40px;background:#0f1116;"></div>
<div class="a" id="copy" style="left:347.2px;top:742.51px;font-family:'Liberation Sans',sans-serif;font-size:12.75px;line-height:12.75px;color:#fff;letter-spacing:-0.17px;-webkit-text-stroke:0.3px #fff;">© 2013 Domat Control System s.r.o. All Rights Reserved.</div>
<div class="a" style="left:0px;top:768px;width:1006px;height:1px;background:#3b3a3e;"></div>
<div class="a" style="left:0px;top:769px;width:1006px;height:2px;background:repeating-conic-gradient(#2c2628 0 25%,#b4b0b2 0 50%) 0 0/2px 2px;"></div>
<div class="a" style="left:1004px;top:0px;width:2px;height:771px;background:repeating-conic-gradient(#2c2628 0 25%,#a8a4a6 0 50%) 0 0/2px 2px;"></div>
</body>
</html>
